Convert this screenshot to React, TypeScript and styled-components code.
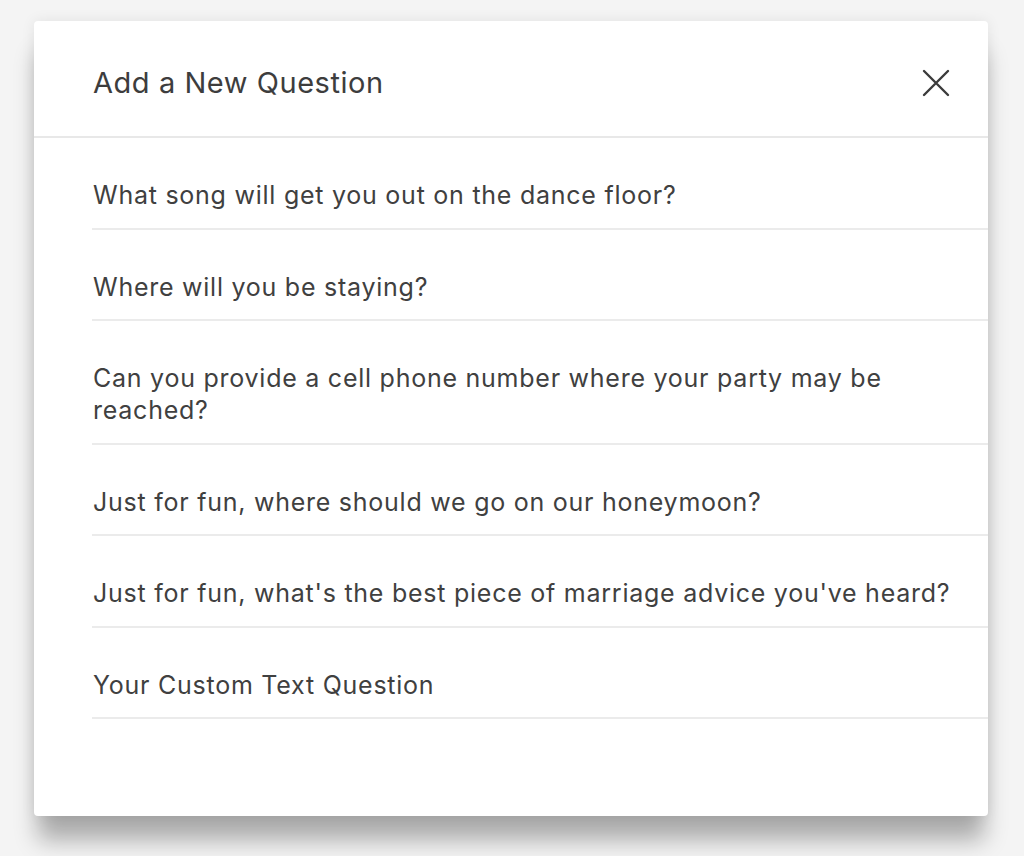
import React from 'react'
import styled, { createGlobalStyle } from 'styled-components'

const GlobalStyle = createGlobalStyle`
  html, body { margin: 0; padding: 0; background: #f4f4f4; }
  body { font-family: Inter, "Noto Sans", sans-serif; -webkit-font-smoothing: antialiased; }
`

const Page = styled.div`
  width: 1024px;
  height: 856px;
  box-sizing: border-box;
  padding: 21px 36px 0 34px;
  overflow: hidden;
`

const Modal = styled.div`
  width: 954px;
  height: 795px;
  background: #fff;
  border-radius: 4px;
  box-shadow: 0 28px 22px -4px rgba(0, 0, 0, 0.3), 0 0 14px rgba(0, 0, 0, 0.08);
  display: flex;
  flex-direction: column;
`

const Header = styled.div`
  height: 117px;
  box-sizing: border-box;
  display: flex;
  align-items: center;
  justify-content: space-between;
  padding: 8px 38px 0 59px;
  border-bottom: 2px solid #e8e8e8;
`

const Title = styled.h2`
  margin: 0;
  font-size: 29px;
  font-weight: 400;
  color: #3d3d3d;
  letter-spacing: 0.55px;
`

const CloseBtn = styled.button`
  border: none;
  background: transparent;
  padding: 0;
  width: 28px;
  height: 28px;
  display: flex;
  align-items: center;
  justify-content: center;
  cursor: pointer;
  color: #3b3b3b;
`

const List = styled.ul`
  list-style: none;
  margin: 0;
  padding: 0 0 0 58px;
`

const Item = styled.li`
  padding: 41px 0 16.5px 1px;
  border-bottom: 2px solid #ebebeb;
  font-size: 25px;
  line-height: 32px;
  letter-spacing: 0.75px;
  color: #404040;
  cursor: pointer;
`

const questions = [
  'What song will get you out on the dance floor?',
  'Where will you be staying?',
  'Can you provide a cell phone number where your party may be reached?',
  'Just for fun, where should we go on our honeymoon?',
  "Just for fun, what's the best piece of marriage advice you've heard?",
  'Your Custom Text Question',
]

export default function App() {
  return (
    <>
      <GlobalStyle />
      <Page>
        <Modal>
          <Header>
            <Title>Add a New Question</Title>
            <CloseBtn aria-label="Close">
              <svg width="28" height="28" viewBox="0 0 28 28" fill="none" stroke="currentColor" strokeWidth="2.4" strokeLinecap="round">
                <path d="M2 2 L26 26 M26 2 L2 26" />
              </svg>
            </CloseBtn>
          </Header>
          <List>
            {questions.map(q => (
              <Item key={q}>{q}</Item>
            ))}
          </List>
        </Modal>
      </Page>
    </>
  )
}
